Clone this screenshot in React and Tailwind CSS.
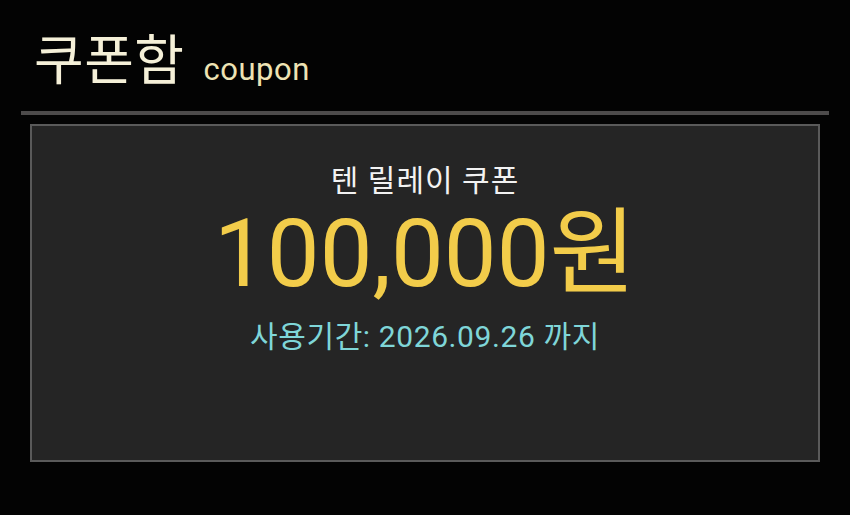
export default function App() {
  return (
    <div
      className="h-[515px] w-[850px] overflow-hidden bg-[#030303]"
      style={{ fontFamily: "Roboto, 'Noto Sans CJK KR', sans-serif" }}
    >
      <header className="flex h-[89px] items-baseline gap-[19px] px-[34px] pt-[35px]">
        <h1 className="text-[54px] leading-[54px] tracking-[0.5px] font-normal text-[#f5f0d8]">쿠폰함</h1>
        <span className="text-[31px] leading-[36px] tracking-[0.5px] text-[#eee3b4]">coupon</span>
      </header>
      <div className="mx-[21px] mt-[22px] h-[4px] bg-[#4d4b4b]" />
      <section className="mx-[30px] mt-[9px] flex h-[338px] flex-col items-center border-2 border-[#5a5a5a] bg-[#252525] pt-[37px]">
        <p className="text-[30px] leading-[36px] tracking-[1px] text-[#f2f2f2]">텐 릴레이 쿠폰</p>
        <p className="mt-[5px] text-[94px] leading-[100px] text-[#f2cc4a]">100,000원</p>
        <p className="mt-[15px] text-[30px] leading-[36px] tracking-[0.6px] text-[#7fd6d8]">사용기간: 2026.09.26 까지</p>
      </section>
    </div>
  );
}
